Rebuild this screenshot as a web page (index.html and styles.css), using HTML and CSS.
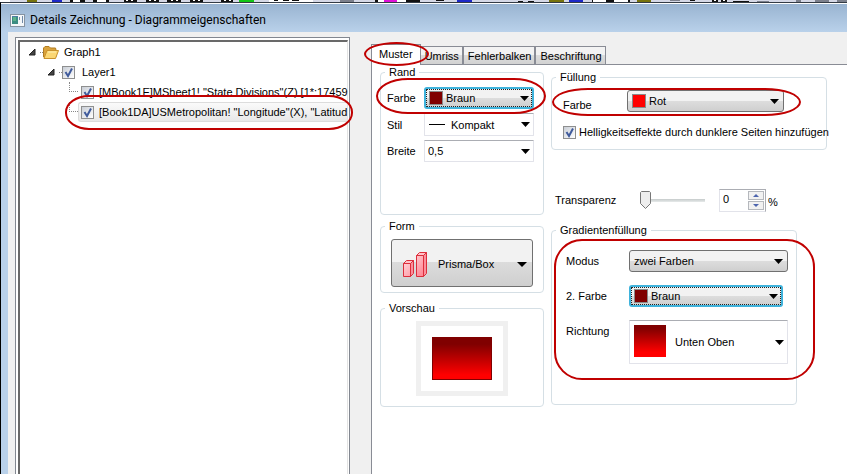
FILE: index.html
```html
<!DOCTYPE html>
<html lang="de">
<head>
<meta charset="utf-8">
<title>Details Zeichnung - Diagrammeigenschaften</title>
<link rel="stylesheet" href="styles.css">
</head>
<body>
<svg class="toolbar" width="847" height="2" shape-rendering="crispEdges" aria-hidden="true">
  <path d="M0 0h10v2H0zM27 0h10v2h-10zM72 0h8v2h-8zM97 0h9v2h-9zM269 0h44v2h-44zM377 0h30v2h-30zM592 0h15v2h-15zM614 0h15v2h-15z" fill="#fff"/>
  <path d="M27 0h2v2h-2zM70 0h3v2h-3zM80 0h5v2h-5zM93 0h4v2h-4zM106 0h3v2h-3zM124 0h13v2h-13zM146 0h13v2h-13zM167 0h14v2h-14zM190 0h13v2h-13zM221 0h12v2h-12zM274 0h4v1h-4zM283 0h6v1h-6zM292 0h7v1h-7zM375 0h3v2h-3zM406 0h14v2h-14zM436 0h8v1h-8zM518 1h5v1h-5zM528 1h6v1h-6zM592 0h1v2h-1zM606 0h8v2h-8zM628 0h2v2h-2zM690 0h5v1h-5zM712 0h6v2h-6zM721 0h6v2h-6zM733 1h16v1h-16z" fill="#111"/>
  <path d="M126 0h2v1h-2zM131 0h2v1h-2zM149 0h2v1h-2zM154 0h2v1h-2zM171 0h2v1h-2zM176 0h2v1h-2zM193 0h2v1h-2zM198 0h2v1h-2zM224 0h2v1h-2zM229 0h2v1h-2zM714 0h2v1h-2zM723 0h2v1h-2z" fill="#fff"/>
  <path d="M27 0h10v2h-10zM549 0h15v2h-15zM637 0h14v2h-14z" fill="#77730c"/>
  <path d="M52 0h10v2h-10zM457 0h15v2h-15zM569 0h14v2h-14z" fill="#1d28c8"/>
  <path d="M239 0h15v2h-15z" fill="#12c716"/>
  <path d="M384 0h13v2h-13z" fill="#e010d8"/>
  <path d="M340 0h14v2h-14zM670 0h10v1h-10zM757 1h12v1h-12zM796 0h5v2h-5zM815 0h14v2h-14zM837 0h10v2h-10z" fill="#7c808c"/>
</svg>
<div class="window">
  <header class="titlebar">
    <svg class="app-icon" width="15" height="13" viewBox="0 0 15 13" aria-hidden="true">
      <rect x=".5" y=".5" width="14" height="12" fill="#f4f7f9" stroke="#8693a1"/>
      <path d="M2 3h6v7H2z" fill="#3c8d83"/><path d="M3 3h3v4H3z" fill="#5bb189"/>
      <path d="M9 3h1v3H9zM12 2h1v7h-1z" fill="#718ba8"/><path d="M2 2h6v1H2z" fill="#4f7ca6"/>
    </svg>
    <h1>Details Zeichnung - Diagrammeigenschaften</h1>
  </header>
  <div class="client">
    <aside class="tree-frame">
      <ul class="tree">
        <li class="node"><svg class="twisty" width="7" height="7" viewBox="0 0 7 7"><path d="M6 0v6H0z" fill="#444" stroke="#222"/></svg><span class="dots"></span>
          <svg class="folder" width="16" height="13" viewBox="0 0 16 13"><path d="M.5 11V2L2 .5h4L7.500 2h5l.5 2v7z" fill="#d9a23c" stroke="#b27d20"/><path d="M1 12.500L4 4.500h11.500L12.500 12.500z" fill="#fbd773" stroke="#c9922c"/><path d="M5 6h8" stroke="#fff0b5"/></svg>
          <span>Graph1</span></li>
        <li class="node level-1"><svg class="twisty" width="7" height="7" viewBox="0 0 7 7"><path d="M6 0v6H0z" fill="#444" stroke="#222"/></svg><span class="dots"></span>
          <label><input type="checkbox" checked><span>Layer1</span></label></li>
        <li class="node level-2"><span class="branch through"></span><label><input type="checkbox" checked><span class="text">[MBook1E]MSheet1! "State Divisions"(Z) [1*:17459</span></label></li>
        <li class="node level-2"><span class="branch"></span><label class="selected"><input type="checkbox" checked><span class="text">[Book1DA]USMetropolitan! "Longitude"(X), "Latitud</span></label></li>
      </ul>
      <span class="ring ring-tree"></span>
    </aside>
    <main class="pages">
      <nav class="tabs">
        <button type="button" class="tab active">Muster<span class="ring ring-tab"></span></button>
        <button type="button" class="tab">Umriss</button>
        <button type="button" class="tab">Fehlerbalken</button>
        <button type="button" class="tab">Beschriftung</button>
      </nav>
      <div class="page">
        <div class="column narrow">
          <fieldset class="edge">
            <legend>Rand</legend>
            <label for="edge-color">Farbe</label>
            <div class="combo focus"><span class="swatch brown"></span><select id="edge-color"><option>Braun</option></select></div>
            <label for="edge-style">Stil</label>
            <div class="combo flat tall"><span class="dash"></span><select id="edge-style"><option>Kompakt</option></select></div>
            <label for="edge-width">Breite</label>
            <div class="combo flat"><select id="edge-width"><option>0,5</option></select></div>
            <span class="ring ring-edge"></span>
          </fieldset>
          <fieldset class="form">
            <legend>Form</legend>
            <button type="button" class="shape">
              <svg width="25" height="26" viewBox="0 0 25 26" aria-hidden="true">
                <defs><linearGradient id="bar" x1="0" y1="0" x2="1" y2="1"><stop offset="0" stop-color="#ffe3e6"/><stop offset="1" stop-color="#ff8290"/></linearGradient></defs>
                <g stroke="#dc2f3c" stroke-linejoin="round"><path d="M.5 12.500h7v13h-7zM13.500 4.500h7v21h-7z" fill="url(#bar)"/><path d="M.5 12.500l3-3h7l-3 3zM13.500 4.500l3-3h7l-3 3z" fill="#ffc2c8"/><path d="M7.500 12.500l3-3v13l-3 3zM20.500 4.500l3-3v21l-3 3z" fill="#fb8f9b"/></g>
              </svg>
              <span>Prisma/Box</span><i class="arrow"></i>
            </button>
          </fieldset>
          <fieldset class="preview">
            <legend>Vorschau</legend>
            <div class="preview-frame"><div class="preview-fill"></div></div>
          </fieldset>
        </div>
        <div class="column wide">
          <fieldset class="fill">
            <legend>Füllung</legend>
            <label for="fill-color">Farbe</label>
            <div class="combo"><span class="swatch red"></span><select id="fill-color"><option>Rot</option></select></div>
            <label class="check"><input type="checkbox" checked>Helligkeitseffekte durch dunklere Seiten hinzufügen</label>
            <span class="ring ring-fill"></span>
          </fieldset>
          <div class="transparency">
            <label for="alpha">Transparenz</label>
            <input id="alpha" type="range" min="0" max="100" value="0">
            <div class="spin"><input type="text" value="0" aria-label="Transparenz in Prozent">
              <div class="steps"><button type="button" aria-label="Mehr"><i class="up"></i></button><button type="button" aria-label="Weniger"><i class="down"></i></button></div>
            </div>
            <span>%</span>
          </div>
          <fieldset class="gradient">
            <legend>Gradientenfüllung</legend>
            <label for="mode">Modus</label>
            <div class="combo"><select id="mode"><option>zwei Farben</option></select></div>
            <label for="second">2. Farbe</label>
            <div class="combo focus"><span class="swatch brown"></span><select id="second"><option>Braun</option></select></div>
            <label for="direction">Richtung</label>
            <div class="combo flat large"><span class="ramp"></span><select id="direction"><option>Unten Oben</option></select></div>
            <span class="ring ring-gradient"></span>
          </fieldset>
        </div>
      </div>
    </main>
  </div>
</div>
</body>
</html>
```
FILE: styles.css
```css
* { box-sizing: border-box; }
body {
  margin: 0;
  min-height: 100vh;
  display: flex;
  flex-direction: column;
  overflow: hidden;
  background: #d5d8e6;
  font: 11px/14px "Liberation Sans", Arial, sans-serif;
  color: #000;
}
button, input, select { font: inherit; color: inherit; margin: 0; padding: 0; }
.toolbar { display: block; flex: none; }
.window {
  flex: 1;
  display: flex;
  flex-direction: column;
  border-top: 1px solid #333b44;
  border-left: 1px solid #000;
  background: #b9d1ea;
}
.titlebar {
  height: 29px;
  padding-left: 9px;
  display: flex;
  align-items: center;
  gap: 5px;
  border-top: 1px solid #fff;
  background: linear-gradient(#99b4d1, #b9d1ea);
}
.titlebar h1 { margin: 0; padding-top: 4px; font: 12px/16px Roboto, "Open Sans", sans-serif; }
.app-icon { margin-top: 4px; }
.client {
  flex: 1;
  display: flex;
  gap: 21px;
  margin-left: 7px;
  padding: 5px 0 0 7px;
  background: #f0f0f0;
}

/* tree */
.tree-frame {
  position: relative;
  flex: 0 0 335px;
  min-width: 0;
  border: 1px solid #828790;
  border-bottom: 0;
  background: #fff;
  padding: 2px 1px 0 2px;
  display: flex;
}
.tree {
  flex: 1;
  min-width: 0;
  margin: 0;
  padding: 0 0 0 9px;
  list-style: none;
  border: 1px solid #e3e3e3;
  border-top: 2px solid #696969;
  border-left: 2px solid #696969;
  border-bottom: 0;
}
.node { height: 20px; display: flex; align-items: center; white-space: nowrap; }
.node label { display: flex; align-items: center; gap: 7px; min-width: 0; }
.level-1 { padding-left: 19px; }
.level-2 { padding-left: 40px; }
.twisty { margin-right: 4px; }
.dots { width: 3px; border-top: 1px dotted #888; }
.folder { margin-right: 5px; }
.branch { align-self: flex-start; flex: none; width: 9px; height: 10px; border-left: 1px dotted #888; border-bottom: 1px dotted #888; }
.level-2 label { flex: 1; height: 20px; padding-left: 3px; gap: 5px; }
.selected { border: 1px solid #dcdcdc; border-right: 0; border-radius: 3px 0 0 3px; background: linear-gradient(#fafafa, #e8e8e8); }
.level-2 .selected { padding-left: 2px; }
input[type="checkbox"] {
  appearance: none;
  flex: none;
  width: 13px;
  height: 13px;
  border: 1px solid #8e8f8f;
  background: url("data:image/svg+xml,%3Csvg xmlns='http://www.w3.org/2000/svg' width='11' height='11'%3E%3Cpath d='M2.500 5l2.500 4 4-7.500' fill='none' stroke='%23405b9c' stroke-width='2'/%3E%3C/svg%3E"), linear-gradient(135deg, #c9ced6, #fff);
}

/* tabs */
.pages { flex: 1; min-width: 0; display: flex; flex-direction: column; padding-top: 7px; }
.tabs { display: flex; align-items: flex-end; height: 20px; }
.tab {
  height: 18px;
  padding: 0 3px 0 4px;
  border: 1px solid #898c95;
  border-bottom: 0;
  margin-right: -1px;
  border-right: 2px solid #898c95;
  background: linear-gradient(#f3f3f3 50%, #dcdcdc 50%, #d2d2d2);
  white-space: nowrap;
}
.tab:last-child { border-right-width: 1px; }
.tab.active { position: relative; z-index: 1; height: 21px; margin-bottom: -1px; padding: 0 7px 2px; border-right-width: 1px; background: #fff; }
.page {
  flex: 1;
  display: flex;
  align-items: flex-start;
  gap: 7px;
  padding-left: 8px;
  border-top: 1px solid #898c95;
  border-left: 1px solid #898c95;
  background: #fff;
}
.column { display: flex; flex-direction: column; }
.narrow { flex: 0 0 164px; gap: 4px; }
.wide { flex: 0 0 276px; padding-top: 5px; }

/* groups */
fieldset {
  --inset: 6px;
  position: relative;
  min-width: 0;
  margin: 0;
  padding: 6px var(--inset);
  border: 1px solid #d5dfe5;
  border-radius: 4px;
}
legend { margin-left: calc(4px - var(--inset)); padding: 0 4px; height: 14px; }
.edge { height: 150px; padding-top: 8px; display: grid; grid-template-columns: 37px 110px; align-content: start; row-gap: 4px; align-items: center; }
.form { --inset: 10px; height: 74px; }
.preview { margin-top: 4px; height: 106px; }
.fill { --inset: 11px; height: 80px; display: grid; grid-template-columns: 64px 157px; row-gap: 13px; align-items: end; align-content: start; }
.gradient { --inset: 14px; width: 246px; margin-top: 11px; height: 182px; padding: 13px 0 0 var(--inset); display: grid; grid-template-columns: 63px 159px; row-gap: 13px; align-content: start; align-items: center; }
.gradient label { align-self: start; padding-top: 4px; }

/* controls */
.combo {
  height: 22px;
  display: flex;
  align-items: center;
  padding: 0 4px;
  border: 1px solid #707070;
  border-radius: 3px;
  background: linear-gradient(#f2f2f2 50%, #dddddd 50%, #cfcfcf);
}
.combo.focus { padding: 0 3px; border: 2px solid #3fb3dc; outline: 1px dotted #222; outline-offset: -3px; }
.gradient .focus { width: 154px; }
.combo.flat { border: 1px solid #e2e3ea; border-top-color: #abadb3; border-radius: 1px; background: #fff; padding: 0 3px; }
.combo.tall { height: 23px; }
.combo.large { height: 44px; }
select {
  appearance: none;
  flex: 1;
  min-width: 0;
  height: 100%;
  border: 0;
  outline: 0;
  background: url("data:image/svg+xml,%3Csvg xmlns='http://www.w3.org/2000/svg' width='9' height='5'%3E%3Cpath d='M0 0h9L4.500 5z'/%3E%3C/svg%3E") right center no-repeat;
}
.swatch { width: 14px; height: 14px; margin-right: 3px; border: 1px solid #8a8a8a; }
.brown { background: #800000; }
.red { background: #f00; }
.dash { width: 16px; margin: 0 6px 0 1px; border-top: 1px solid #000; }
.ramp { width: 32px; height: 32px; margin: 0 9px 2px 1px; background: linear-gradient(#800000 10%, #f00 85%); }
.shape {
  width: 100%;
  height: 48px;
  display: flex;
  align-items: center;
  gap: 10px;
  padding: 2px 5px 0 11px;
  border: 1px solid #707070;
  border-radius: 3px;
  background: linear-gradient(#f2f2f2 47%, #dcdcdc 47%, #cfcfcf);
}
.arrow, .up, .down { width: 0; height: 0; border: 4px solid transparent; }
.arrow { margin-left: auto; border-width: 5px 5px 0; border-top-color: #000; }
.preview-frame { width: 92px; height: 75px; margin: 0 auto; padding: 11px; border: 5px solid #f0f0f0; }
.preview-fill { height: 100%; border: 1px solid #800000; background: linear-gradient(#800000 15%, #f00 90%); }
.check { grid-column: 1 / -1; display: flex; align-items: center; gap: 3px; white-space: nowrap; }
.transparency { display: flex; align-items: center; height: 24px; margin-top: 38px; padding-left: 4px; }
.transparency label { flex: 0 0 85px; }
input[type="range"] { appearance: none; width: 65px; height: 18px; margin-right: 14px; background: linear-gradient(#c5cbcb, #e7eaea) center / 100% 3px no-repeat; }
input[type="range"]::-webkit-slider-thumb {
  appearance: none;
  width: 11px;
  height: 18px;
  background: url("data:image/svg+xml,%3Csvg xmlns='http://www.w3.org/2000/svg' width='11' height='18'%3E%3Cpath d='M.5 1.500l1-1h8l1 1v11l-5 5-5-5z' fill='%23eee' stroke='%23777'/%3E%3C/svg%3E");
}
.spin { width: 47px; height: 23px; display: flex; margin-right: 2px; padding: 1px; border: 1px solid #abadb3; border-left-color: #e2e3ea; border-bottom-color: #e2e3ea; }
.spin input { width: 27px; border: 0; padding: 0 2px 3px; outline: 0; background: none; }
.steps { flex: 1; display: flex; flex-direction: column; gap: 1px; }
.steps button { flex: 1; display: flex; align-items: center; justify-content: center; border: 1px solid #b5b8bd; background: #f1f1f1; }
.up { border-width: 0 3px 3px; border-bottom-color: #4d64ae; }
.down { border-width: 3px 3px 0; border-top-color: #4d64ae; }
.transparency > span { padding-top: 4px; }

/* highlight marks over the controls */
.ring { position: absolute; z-index: 2; border: 2px solid #c00000; pointer-events: none; }
.ring-tree { left: 49px; top: 57px; width: 288px; height: 35px; border-radius: 24px / 17px; }
.ring-tab { left: -8px; top: -3px; width: 65px; height: 24px; border-radius: 50%; }
.ring-edge { left: -5px; top: -1px; width: 170px; height: 36px; border-radius: 32px / 18px; }
.ring-fill { left: 0; top: 4px; width: 249px; height: 28px; border-radius: 36px / 14px; }
.ring-gradient { left: 2px; top: 2px; width: 261px; height: 141px; border-radius: 28px; }
```
